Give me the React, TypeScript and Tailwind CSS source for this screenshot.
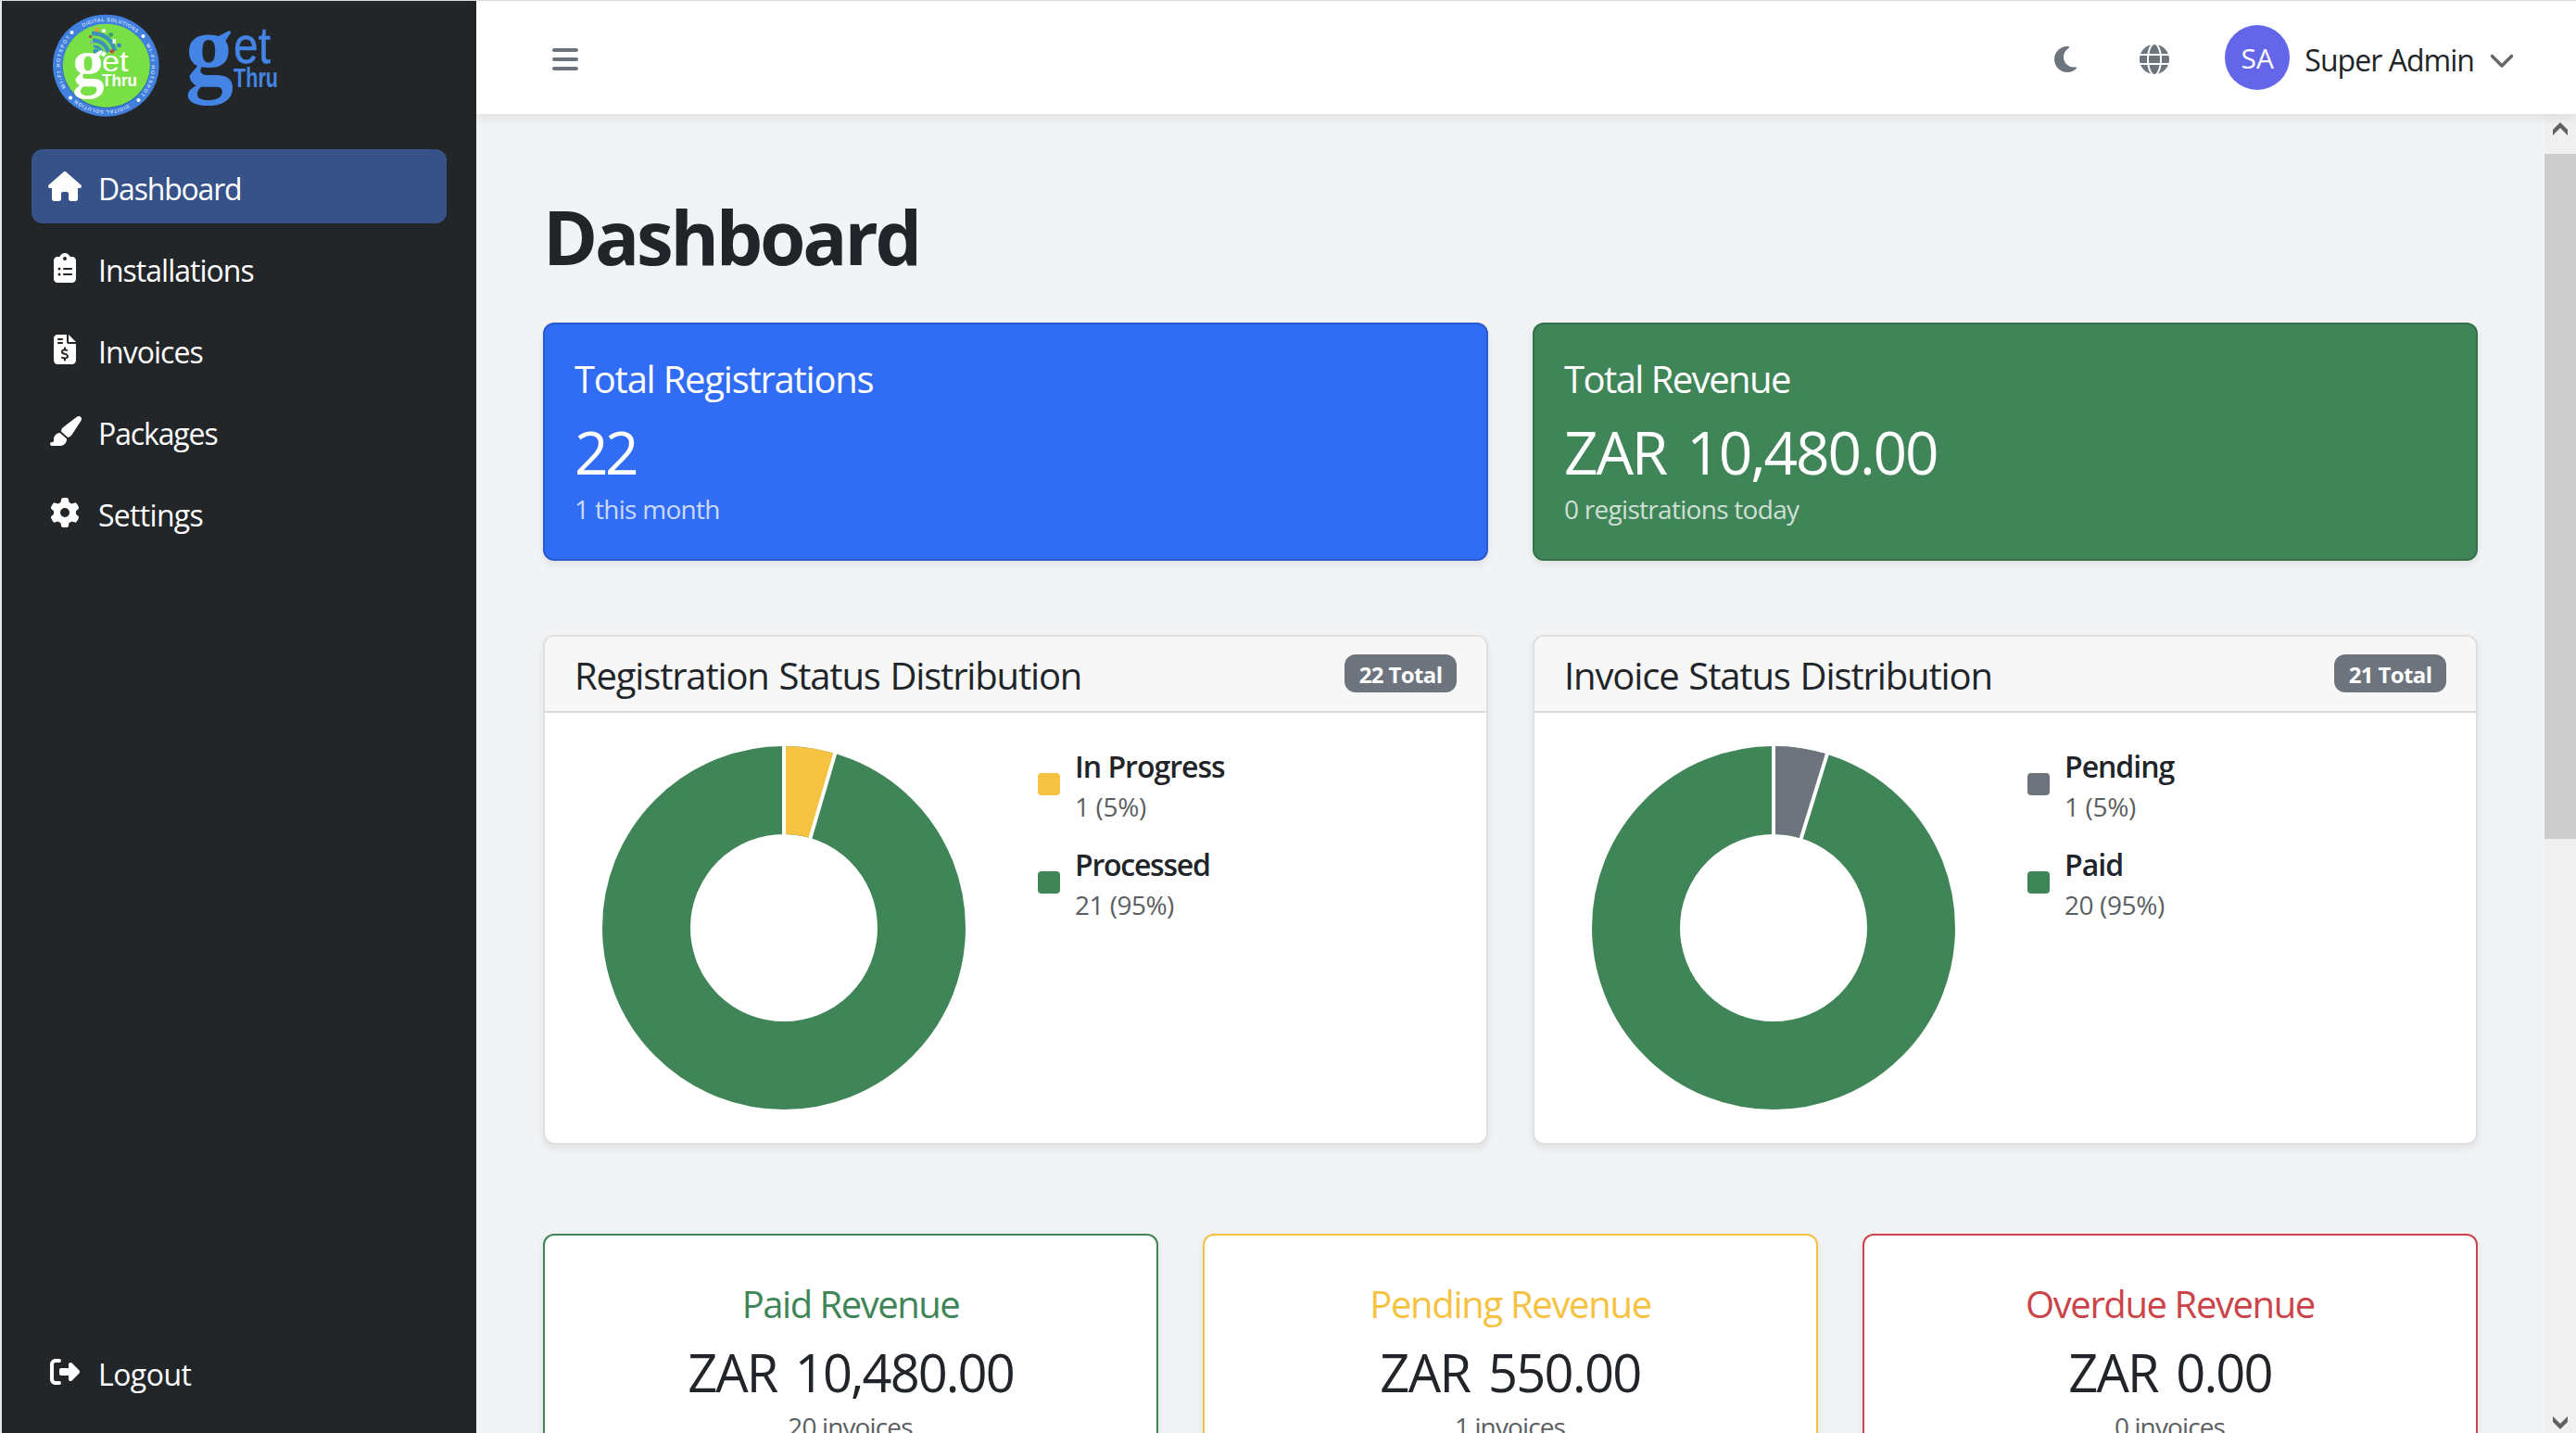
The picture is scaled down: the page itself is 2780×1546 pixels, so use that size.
import type { ReactNode } from "react";
import {
  FaBars,
  FaChevronDown,
  FaClipboardList,
  FaFileInvoiceDollar,
  FaGear,
  FaGlobe,
  FaHouse,
  FaMoon,
  FaPaintbrush,
  FaRightFromBracket,
} from "react-icons/fa6";

const RING =
  "M64.5 71 A49.5 48 0 0 1 163.5 71 A49.5 48 0 0 1 64.5 71 A49.5 48 0 0 1 163.5 71";

function Logo() {
  return (
    <svg width="320" height="128" viewBox="0 0 320 128">
      <defs>
        <path id="ring" d={RING} />
      </defs>
      <ellipse cx="114.3" cy="70.7" rx="57.3" ry="55" fill="#4180de" />
      <ellipse cx="114.8" cy="71.5" rx="47.5" ry="45.5" fill="#2f68b4" />
      <ellipse cx="114.8" cy="70.7" rx="47" ry="45" fill="#79df46" />
      <g fill="#c9dbf7" fontFamily="Liberation Sans, sans-serif" fontSize="5.4" fontWeight="700">
        <text>
          <textPath href="#ring" startOffset="51" textLength="62">DIGITAL SOLUTIONS</textPath>
        </text>
        <text>
          <textPath href="#ring" startOffset="129" textLength="58">WI-FI HOTSPOT</textPath>
        </text>
        <text>
          <textPath href="#ring" startOffset="204" textLength="60">DIGITAL SOLUTION</textPath>
        </text>
        <text>
          <textPath href="#ring" startOffset="281" textLength="58">WI-FI HOTSPOT</textPath>
        </text>
      </g>
      <g fill="#fff">
        <circle cx="77.5" cy="35" r="2" />
        <circle cx="154.5" cy="39" r="2" />
        <circle cx="149.5" cy="108" r="2" />
        <circle cx="76" cy="105.5" r="2" />
      </g>
      <g fill="none" stroke="#3c93b8" strokeWidth="4.4">
        <path d="M99 36 Q119 36 124 55" />
        <path d="M100 43.500 Q113 44 117 56" />
        <path d="M101 50 Q108 50 111 57" strokeWidth="3" />
      </g>
      <circle cx="103.500" cy="55.500" r="3" fill="#3c93b8" />
      <circle cx="104.500" cy="32" r="2.400" fill="#e89a3c" />
      <circle cx="97.500" cy="39.500" r="1.600" fill="#b8403f" />
      <circle cx="99" cy="46" r="2" fill="#9aa79a" />
      <rect x="110" y="31.500" width="4" height="3.500" fill="#f2f7f2" />
      <rect x="117.500" y="35.500" width="4.500" height="4" fill="#35a06c" />
      <rect x="121.500" y="42" width="3.500" height="5" fill="#e8efe8" />
      <circle cx="128.500" cy="49" r="2.300" fill="#3b7fd0" />
      <circle cx="121" cy="55.500" r="2.200" fill="#d2423c" />
      <g fill="#fff">
        <rect x="110" y="56" width="4" height="5" transform="rotate(30 112 58)" />
        <text x="78.5" y="92" fontFamily="Liberation Serif, serif" fontSize="72" fontWeight="700" textLength="34" lengthAdjust="spacingAndGlyphs">g</text>
        <text x="110" y="77" fontFamily="Liberation Sans, sans-serif" fontSize="32" textLength="28.500" lengthAdjust="spacingAndGlyphs">et</text>
        <text x="110" y="93" fontFamily="Liberation Sans, sans-serif" fontSize="19" fontWeight="700" textLength="38" lengthAdjust="spacingAndGlyphs">Thru</text>
      </g>
      <g fill="#4384e4">
        <text x="200" y="90" fontFamily="Liberation Serif, serif" fontSize="110" fontWeight="700" textLength="52" lengthAdjust="spacingAndGlyphs">g</text>
        <text x="252" y="67.500" fontFamily="Liberation Sans, sans-serif" fontSize="56" stroke="#4384e4" strokeWidth=".5" textLength="40" lengthAdjust="spacingAndGlyphs">et</text>
        <text x="252" y="94" fontFamily="Liberation Sans, sans-serif" fontSize="30" fontWeight="700" textLength="48" lengthAdjust="spacingAndGlyphs">Thru</text>
      </g>
    </svg>
  );
}

function NavItem({ icon, children, active = false, tracking }: { icon: ReactNode; children: ReactNode; active?: boolean; tracking: string }) {
  return (
    <a
      className={`flex h-20 w-[448px] items-center rounded-[12px] pl-[18px] text-[32px] leading-none text-white ${active ? "bg-[#365288]" : ""}`}
    >
      <span className="mr-[18px] flex w-9 justify-center">{icon}</span>
      <span className={`pt-[5px] ${tracking}`}>{children}</span>
    </a>
  );
}

function StatCard({ color, title, titleTracking, value, valueTracking, note, noteTracking }: Record<string, string>) {
  return (
    <div className={`h-[257px] rounded-[12px] border-2 border-black/15 px-8 pt-[35px] text-white shadow-[0_4px_8px_rgba(0,0,0,.075)] ${color}`}>
      <h5 className={`text-[40px] leading-[48px] ${titleTracking}`}>{title}</h5>
      <p className={`mt-[15px] text-[64px] leading-[80px] [word-spacing:0.12em] ${valueTracking}`}>{value}</p>
      <p className={`text-[28px] leading-[42px] text-white/75 ${noteTracking}`}>{note}</p>
    </div>
  );
}

type Slice = { label: string; detail: string; swatch: string; labelTracking: string; detailTracking: string };

function Donut({ fraction, minor }: { fraction: number; minor: string }) {
  const a = fraction * 2 * Math.PI;
  const at = (r: number) => `${196 + r * Math.sin(a)} ${196 - r * Math.cos(a)}`;
  return (
    <svg width="392" height="392" viewBox="0 0 392 392">
      <circle cx="196" cy="196" r="148.5" fill="none" stroke="#408558" strokeWidth="95" />
      <path d={`M196 0 A196 196 0 0 1 ${at(196)} L${at(101)} A101 101 0 0 0 196 95 Z`} fill={minor} />
      <path d={`M196 -2 V98 M${at(98)} L${at(198)}`} stroke="#fff" strokeWidth="4" />
    </svg>
  );
}

function ChartCard({ title, tracking, total, fraction, minor, slices }: { title: string; tracking: string; total: string; fraction: number; minor: string; slices: Slice[] }) {
  return (
    <div className="h-[550px] overflow-hidden rounded-[12px] border-2 border-[#dddfe0] bg-white shadow-[0_4px_8px_rgba(0,0,0,.075)]">
      <div className="flex h-[82px] items-center justify-between border-b-2 border-[#d9dadb] bg-[#f7f7f7] px-8">
        <h5 className={`pt-[3px] text-[40px] leading-[48px] [word-spacing:0.04em] ${tracking}`}>{title}</h5>
        <span className="mb-[2px] flex h-[41px] w-[121px] items-center justify-center rounded-[12px] bg-[#6d747d] pt-[3px] text-[24px] leading-none font-bold tracking-[-0.026em] text-white">
          {total}
        </span>
      </div>
      <div className="flex pt-9 pl-[62px]">
        <Donut fraction={fraction} minor={minor} />
        <ul className="-mt-1 ml-[78px] flex flex-col gap-4">
          {slices.map((s) => (
            <li key={s.label} className="flex h-[90px] items-center gap-4">
              <span className={`size-6 rounded-[4px] ${s.swatch}`} />
              <div className="pt-[2px]">
                <div className={`text-[32px] leading-[48px] font-semibold ${s.labelTracking}`}>{s.label}</div>
                <div className={`-mt-[2px] text-[28px] leading-[42px] text-[#5c5f62] ${s.detailTracking}`}>{s.detail}</div>
              </div>
            </li>
          ))}
        </ul>
      </div>
    </div>
  );
}

function RevenueCard({ border, color, title, titleTracking, value, valueTracking, note }: Record<string, string>) {
  return (
    <div className={`h-[290px] rounded-[12px] border-2 bg-white pt-[50px] text-center shadow-[0_4px_8px_rgba(0,0,0,.075)] ${border}`}>
      <h5 className={`text-[40px] leading-[48px] ${color} ${titleTracking}`}>{title}</h5>
      <p className={`mt-[15px] text-[56px] leading-[68px] [word-spacing:0.12em] ${valueTracking}`}>{value}</p>
      <p className="mt-1 pr-px text-[28px] leading-[42px] tracking-[-0.031em] text-[#5c5f62]">{note}</p>
    </div>
  );
}

export default function App() {
  return (
    <div className="flex h-[1546px] w-[2780px] overflow-hidden border-t border-l-2 border-t-[#d9dcdd] border-l-[#e6e9eb] bg-[#f2f3f5] font-['Open_Sans','Noto_Sans',sans-serif] text-[#212529]">
      <aside className="flex w-[512px] shrink-0 flex-col bg-[#222629]">
        <div className="-mt-px -ml-0.5 h-[128px]">
          <Logo />
        </div>
        <nav className="mt-[33px] ml-8 flex flex-col gap-2">
          <NavItem active icon={<FaHouse className="h-8 w-9" />} tracking="tracking-[-0.037em]">Dashboard</NavItem>
          <NavItem icon={<FaClipboardList className="h-8 w-6" />} tracking="tracking-[-0.031em]">Installations</NavItem>
          <NavItem icon={<FaFileInvoiceDollar className="h-8 w-6" />} tracking="tracking-[-0.030em]">Invoices</NavItem>
          <NavItem icon={<FaPaintbrush className="h-8 w-9" />} tracking="tracking-[-0.035em]">Packages</NavItem>
          <NavItem icon={<FaGear className="size-8" />} tracking="tracking-[-0.022em]">Settings</NavItem>
        </nav>
        <div className="mt-auto mb-[26px] ml-8">
          <NavItem icon={<FaRightFromBracket className="size-8" />} tracking="tracking-[-0.017em]">Logout</NavItem>
        </div>
      </aside>

      <div className="flex min-w-0 flex-1 flex-col">
        <header className="relative z-10 flex h-[122px] shrink-0 items-center bg-white pr-[66px] pl-[82px] text-[#6c757d] shadow-[0_4px_12px_rgba(0,0,0,.085)]">
          <FaBars className="mt-[4px] h-8 w-7" />
          <div className="ml-auto flex items-center">
            <FaMoon className="mt-[4px] h-8 w-6" />
            <FaGlobe className="mt-[4px] ml-[68px] size-8" />
            <div className="ml-[60px] flex size-[70px] items-center justify-center rounded-full bg-[#6366e8] pt-px text-[30px] leading-none text-white">
              SA
            </div>
            <span className="ml-4 pt-[5px] text-[32px] leading-none tracking-[-0.030em] text-[#212529]">Super Admin</span>
            <FaChevronDown className="mt-[4px] ml-4 size-7 text-[#66686b]" />
          </div>
        </header>

        <div className="flex min-h-0 flex-1">
          <main className="flex-1 overflow-hidden px-[72px] pt-[84px]">
            <h1 className="text-[80px] leading-[96px] font-bold tracking-[-0.041em]">Dashboard</h1>

            <section className="mt-[45px] grid grid-cols-2 gap-12">
              <StatCard
                color="bg-[#316cf4]"
                title="Total Registrations"
                titleTracking="tracking-[-0.031em]"
                value="22"
                valueTracking="tracking-[-0.056em]"
                note="1 this month"
                noteTracking="tracking-[-0.025em]"
              />
              <StatCard
                color="bg-[#408558]"
                title="Total Revenue"
                titleTracking="tracking-[-0.039em]"
                value="ZAR 10,480.00"
                valueTracking="tracking-[-0.0336em]"
                note="0 registrations today"
                noteTracking="tracking-[-0.0254em]"
              />
            </section>

            <section className="mt-20 grid grid-cols-2 gap-12">
              <ChartCard
                title="Registration Status Distribution"
                tracking="tracking-[-0.0295em]"
                total="22 Total"
                fraction={1 / 22}
                minor="#f5c242"
                slices={[
                  { label: "In Progress", detail: "1 (5%)", swatch: "bg-[#f5c242]", labelTracking: "tracking-[-0.031em]", detailTracking: "tracking-[-0.012em]" },
                  { label: "Processed", detail: "21 (95%)", swatch: "bg-[#408558]", labelTracking: "tracking-[-0.039em]", detailTracking: "tracking-[-0.019em]" },
                ]}
              />
              <ChartCard
                title="Invoice Status Distribution"
                tracking="tracking-[-0.0285em]"
                total="21 Total"
                fraction={1 / 21}
                minor="#6d747d"
                slices={[
                  { label: "Pending", detail: "1 (5%)", swatch: "bg-[#6d747d]", labelTracking: "tracking-[-0.032em]", detailTracking: "tracking-[-0.012em]" },
                  { label: "Paid", detail: "20 (95%)", swatch: "bg-[#408558]", labelTracking: "tracking-[-0.030em]", detailTracking: "tracking-[-0.014em]" },
                ]}
              />
            </section>

            <section className="mt-24 grid grid-cols-3 gap-12">
              <RevenueCard border="border-[#408558]" color="text-[#408558]" title="Paid Revenue" titleTracking="tracking-[-0.037em]" value="ZAR 10,480.00" valueTracking="tracking-[-0.0344em]" note="20 invoices" />
              <RevenueCard border="border-[#f5c242]" color="text-[#f5c242]" title="Pending Revenue" titleTracking="tracking-[-0.033em]" value="ZAR 550.00" valueTracking="tracking-[-0.030em]" note="1 invoices" />
              <RevenueCard border="border-[#cb444a]" color="text-[#cb444a]" title="Overdue Revenue" titleTracking="tracking-[-0.035em]" value="ZAR 0.00" valueTracking="tracking-[-0.033em]" note="0 invoices" />
            </section>
          </main>

          <div className="flex w-[34px] shrink-0 flex-col items-center bg-[#f0f0f0]">
            <svg className="mt-[9px] shrink-0" width="16" height="14" viewBox="0 0 16 14">
              <path d="M8 0 L16 8 V14 L8 6 L0 14 V8 Z" fill="#606060" />
            </svg>
            <div className="mt-5 h-[739px] w-full bg-[#cdcdcd]" />
            <svg className="mt-auto mb-1 shrink-0" width="16" height="14" viewBox="0 0 16 14">
              <path d="M8 14 L0 6 V0 L8 8 L16 0 V6 Z" fill="#606060" />
            </svg>
          </div>
        </div>
      </div>
    </div>
  );
}
